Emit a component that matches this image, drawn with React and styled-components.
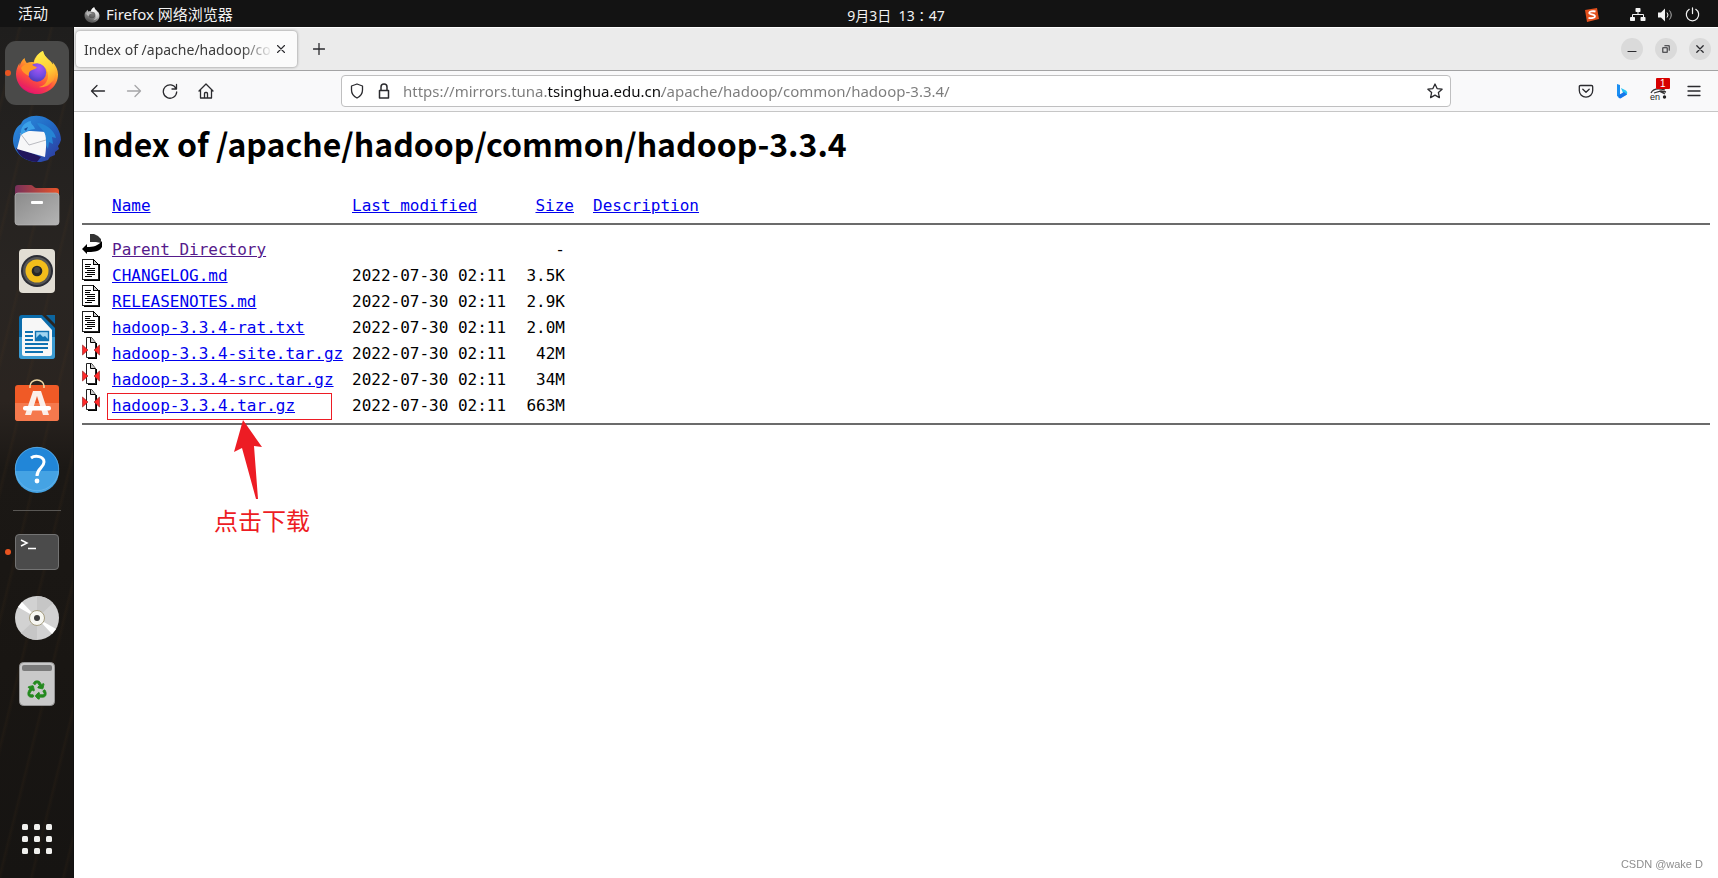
import React from 'react'
import styled, { createGlobalStyle } from 'styled-components'
import { FaRecycle } from 'react-icons/fa'

const uiFont = '"Noto Sans", "Noto Sans CJK SC", sans-serif';

const GlobalStyle = createGlobalStyle`
    * {
        box-sizing: border-box;
    }
    body {
        margin: 0;
        background: #fff;
        font-family: ${uiFont};
    }
    svg {
        display: block;
        flex: none;
    }
    button {
        padding: 0;
        border: none;
        background: none;
        font: inherit;
        color: inherit;
    }
`;

/* desktop */
const Desktop = styled.div`
    min-height: 100vh;
    display: flex;
    flex-direction: column;
`;
const TopBar = styled.header`
    height: 27px;
    display: flex;
    background: #131313;
    color: #f2f2f2;
    font-size: 15px;
    line-height: 27px;
`;
const Activities = styled.button`
    width: 74px;
    padding-right: 8px;
`;
const TopBarMain = styled.div`
    flex: 1;
    display: grid;
    grid-template-columns: 1fr auto 1fr;
`;
const AppMenu = styled.button`
    display: flex;
    align-items: center;
    gap: 6px;
    justify-self: start;
    margin-left: 10px;
`;
const Clock = styled.button`
    font-size: 14px;
    white-space: pre;
    padding-top: 2px;
`;
const Tray = styled.div`
    display: flex;
    align-items: center;
    justify-content: flex-end;
    gap: 12px;
    padding-right: 18px;
`;
const TrayApp = styled.span`
    margin-right: 19px;
`;
const Body = styled.div`
    flex: 1;
    display: flex;
`;

/* dock */
const Dock = styled.nav`
    width: 74px;
    flex: none;
    display: flex;
    flex-direction: column;
    align-items: center;
    gap: 2px;
    padding: 14px 0 7px;
    background:
        repeating-linear-gradient(104deg, rgba(120, 75, 30, 0) 0 17px, rgba(120, 75, 30, 0.08) 19px, rgba(120, 75, 30, 0) 22px 31px),
        linear-gradient(#1f1e1d, #292522 30%, #2a2420 44%, #1b1815 52%, #191613 75%, #161412);
    border-right: 1px solid #111;
`;
const DockItem = styled.button`
    width: 64px;
    height: 64px;
    display: flex;
    align-items: center;
    justify-content: center;
    border-radius: 11px;
    background: ${props => props.$active ? '#4a4a49' : 'transparent'};
    position: relative;

    &::before {
        content: '';
        display: ${props => props.$running ? 'block' : 'none'};
        position: absolute;
        left: 0;
        top: 29px;
        width: 6px;
        height: 6px;
        border-radius: 50%;
        background: #e95420;
    }
`;
const DockLine = styled.hr`
    width: 48px;
    height: 1px;
    margin: 7px 0;
    border: none;
    background: #595754;
`;
const DockEnd = styled.div`
    margin-top: auto;
`;

/* browser */
const Browser = styled.main`
    flex: 1;
    min-width: 0;
    display: flex;
    flex-direction: column;
    background: #fff;
`;
const TabStrip = styled.div`
    height: 44px;
    display: flex;
    align-items: center;
    padding: 0 7px 0 2px;
    background: #ebebeb;
    border-top: 1px solid #fff;
    border-bottom: 1px solid #a3a3a4;
`;
const Tab = styled.div`
    width: 221px;
    height: 36px;
    display: flex;
    align-items: center;
    padding: 0 8px;
    border-radius: 4px;
    background: #fbfbfb;
    box-shadow: 0 0 3px rgba(0, 0, 0, 0.45);
`;
const TabTitle = styled.span`
    flex: 1;
    white-space: nowrap;
    font-size: 14px;
    color: #3c3c3c;
    mask-image: linear-gradient(to left, transparent, #000 32px);
`;
const TabClose = styled.button`
    width: 16px;
    height: 16px;
    display: grid;
    place-items: center;
`;
const NewTab = styled.button`
    width: 32px;
    height: 32px;
    margin-left: 6px;
    display: grid;
    place-items: center;
`;
const WindowButtons = styled.div`
    margin-left: auto;
    display: flex;
    gap: 12px;
`;
const WindowButton = styled.button`
    width: 22px;
    height: 22px;
    border-radius: 50%;
    background: #dadada;
    display: grid;
    place-items: center;
`;
const NavBar = styled.div`
    height: 41px;
    display: flex;
    align-items: center;
    padding: 0 6px;
    background: #f9f9fa;
    border-bottom: 1px solid #c6c6c6;
`;
const NavButton = styled.button`
    width: 36px;
    height: 32px;
    display: grid;
    place-items: center;
    opacity: ${props => props.disabled ? 0.4 : 1};
`;
const Spring = styled.div`
    width: 117px;
`;
const UrlBar = styled.label`
    flex: 1;
    height: 32px;
    display: flex;
    align-items: center;
    gap: 11px;
    padding: 0 7px;
    border: 1px solid #bfbfc0;
    border-radius: 4px;
    background: #fff;
`;
/* the domain is darker than the rest of the address */
const UrlInput = styled.input`
    flex: 1;
    min-width: 0;
    padding: 0;
    border: none;
    outline: none;
    font-family: ${uiFont};
    font-size: 15px;
    color: transparent;
    background: linear-gradient(to right, #7b7b7b 145px, #0c0c0d 145px 259px, #7b7b7b 259px);
    background-clip: text;
`;

/* page */
const Page = styled.article`
    padding: 8px;
`;
const Title = styled.h1`
    margin: 0 0 30px;
    font-family: "Noto Sans CJK SC", sans-serif;
    font-size: 32px;
    line-height: 46px;
    font-weight: 700;
    color: #000;
`;
const Listing = styled.table`
    width: 100%;
    table-layout: fixed;
    border-spacing: 0;
    padding-bottom: 8px;
    border-bottom: 2px solid #6b6b6b;
    font-family: "DejaVu Sans Mono", monospace;
    font-size: 16px;
    line-height: 19px;
    color: #000;
`;
const Col = styled.col`
    width: ${props => props.$width};
`;
const HeadCell = styled.th`
    padding: 0 ${props => props.$right ? '19px' : '0'} 8px 0;
    border-bottom: 2px solid #6b6b6b;
    font-weight: 400;
    text-align: ${props => props.$right ? 'right' : 'left'};
`;
const Row = styled.tr`
    height: 26px;

    &:first-child {
        height: 34px;
    }
`;
const Cell = styled.td`
    padding: 0;
    vertical-align: bottom;
    white-space: nowrap;
    position: relative;
`;
const IconCell = styled(Cell)`
    padding-bottom: 4px;
`;
const SizeCell = styled(Cell)`
    padding-right: 28px;
    text-align: right;
`;
const Link = styled.a`
    color: ${props => props.$visited ? '#551a8b' : '#0000ee'};
    text-decoration: underline;
`;

/* notes drawn over the listing */
const Marker = styled.div`
    position: absolute;
    left: -5px;
    top: 4px;
    width: 225px;
    height: 27px;
    border: 1px solid #ed1c24;
`;
const Note = styled.div`
    position: absolute;
    left: 102px;
    top: 31px;
    color: #ed1c24;
    font-family: "Noto Sans CJK SC", sans-serif;
    font-size: 24px;
    line-height: 36px;

    svg {
        margin: 0 0 3px 20px;
    }
`;
const Watermark = styled.div`
    position: fixed;
    right: 15px;
    bottom: 6px;
    font-family: "Liberation Sans", sans-serif;
    font-size: 11px;
    line-height: 16px;
    color: #8e8e8e;
`;

/* dock icons, all on a 48px grid */
const FirefoxIcon = ({ size = 48, gray }) => (
  <svg width={size} height={size} viewBox={gray ? '2 1 44 45' : '0 0 48 48'} style={gray ? { filter: 'grayscale(1) brightness(1.1)' } : undefined}>
    <defs>
      <linearGradient id="ffBody" x1="0.8" y1="0.1" x2="0.35" y2="1">
        <stop offset="0" stopColor="#ffe44a" />
        <stop offset="0.35" stopColor="#ffa52a" />
        <stop offset="0.65" stopColor="#ff4f3c" />
        <stop offset="1" stopColor="#e0126c" />
      </linearGradient>
      <linearGradient id="ffFlame" x1="0.3" y1="0" x2="0.6" y2="1">
        <stop offset="0" stopColor="#fff04a" />
        <stop offset="0.6" stopColor="#ffcb35" />
        <stop offset="1" stopColor="#ff8a2b" />
      </linearGradient>
      <radialGradient id="ffGlobe" cx="0.6" cy="0.25" r="0.8">
        <stop offset="0" stopColor="#a856f4" />
        <stop offset="0.6" stopColor="#6f4be0" />
        <stop offset="1" stopColor="#4a3ab5" />
      </radialGradient>
    </defs>
    <path fill="url(#ffBody)" d="M30 2c1 5 5 8 8 11l2 3c0-1 0-2-.4-3C43 17 45 21 45 25.500C45 37 35.500 45 24 45S3 36 3 25c0-4 1.500-8 3.500-11 0 1 0 2 .2 3 .8-3.500 2.500-6 5-8 0 2 1 3.500 2 5 2.300-.9 4.500-1 7-.8 1-5 5-9.500 9.300-11.200z" />
    <path fill="url(#ffFlame)" d="M30 2c1 5 5 8 8 11 4 4.500 5.500 10 3.500 16C39 36 33 39 26 38c5-1 9-5 9-11 0-6-3-9.500-7-11-3-1-5-2-7-1.500C22 8.500 26 4 30 2z" />
    <circle cx="24" cy="23.500" r="9.200" fill="url(#ffGlobe)" />
    <path fill="#ff9727" d="M8 19c2-3 5-4.300 9-3.800 3 .4 4 2.600 7 2.800-1 2.500-4.500 2.500-6 3.500-2 1.200-2.500 3-2 5.500C12 25 9 23 8 19z" />
    <path fill="#f0246a" opacity=".45" d="M6 33c7 9 25 9 34-1-4 9-12 12.500-19 11.500C14 42.500 9 39 6 33z" />
  </svg>
);
const ThunderbirdIcon = () => (
  <svg width="48" height="48" viewBox="0 0 48 48">
    <defs>
      <linearGradient id="tbBody" x1="0" y1="0" x2="1" y2="1">
        <stop offset="0" stopColor="#2d8fdf" />
        <stop offset=".5" stopColor="#2269c4" />
        <stop offset="1" stopColor="#30349a" />
      </linearGradient>
    </defs>
    <path fill="url(#tbBody)" d="M14 3C19 0 29 0 35 4c8 4 13 13 13 21-1 3-2 5-3 6l1 3-4 3v3l-5 2-2 3-7 2C13 48 1 39 0 26c0-8 3-14 8-17 1-3 3-5 6-6z" />
    <path fill="#21155c" d="M3 33c5 1 16 5 25 9l-4 5C12 46 6 41 3 33z" />
    <path fill="#f7f7f8" d="M8 19c4-1 5-3 10-3l15 1c1 8 0 17-1 25L4 34z" />
    <path fill="none" stroke="#a9abb2" strokeWidth=".8" d="M7 18l9 12 17-5" />
    <path fill="#3ba1e8" d="M8 20c-1-7 3-13 10-14-1 3 3 4 4 8-5 0-9 2-14 6z" />
    <path fill="#164a99" d="M11 14l4-2-2 4z" />
    <path fill="#2584d4" d="M24 8c8 0 17 7 19 15l-4-1 1 7-4-2-1 7c-3-5-1-13-4-17-2-3-5-5-7-9z" />
  </svg>
);
const FilesIcon = () => (
  <svg width="48" height="48" viewBox="0 0 48 48">
    <defs>
      <linearGradient id="fiBack"><stop stopColor="#77305a" /><stop offset="1" stopColor="#e8552a" /></linearGradient>
      <linearGradient id="fiFront" x2="1" y2="1"><stop stopColor="#8b8b8b" /><stop offset="1" stopColor="#b4b4b4" /></linearGradient>
    </defs>
    <path fill="url(#fiBack)" d="M2 15V7a3 3 0 013-3h13c2 0 3 3 5 3h20a3 3 0 013 3v7z" />
    <rect x="2" y="12" width="44" height="32" rx="3" fill="url(#fiFront)" stroke="#b9b9b9" strokeWidth=".7" />
    <rect x="18" y="20" width="12" height="3" rx="1" fill="#fff" />
  </svg>
);
const MusicIcon = () => (
  <svg width="48" height="48" viewBox="0 0 48 48">
    <rect x="6" y="2" width="36" height="44" rx="4" fill="#e2ded4" />
    <circle cx="24" cy="24" r="16" fill="#2b2d35" />
    <circle cx="24" cy="24" r="14" fill="#555" />
    <circle cx="24" cy="24" r="11.500" fill="#f2bd1b" />
    <circle cx="24" cy="24" r="5.300" fill="#272727" />
    <circle cx="24" cy="23" r="3" fill="#454545" />
  </svg>
);
const WriterIcon = () => (
  <svg width="48" height="48" viewBox="0 0 48 48">
    <path fill="#0b6cab" d="M9 2h20l13 13v28a3 3 0 01-3 3H9a3 3 0 01-3-3V5a3 3 0 013-3z" />
    <path fill="#3b9bd2" d="M6 24h36v19a3 3 0 01-3 3H9a3 3 0 01-3-3z" />
    <path fill="#f7f7f7" d="M10 5h18l11 12v24a2 2 0 01-2 2H11a2 2 0 01-2-2V6z" />
    <path fill="#0c659e" d="M33 2h9v9z" />
    <path stroke="#0f72b2" strokeWidth="1.800" d="M12 19h8M12 23h8M12 27h8M12 31h23M12 35h23M12 39h18" />
    <rect x="22.500" y="18.500" width="13" height="9" fill="#9fd4f1" stroke="#0f72b2" strokeWidth="1.400" />
    <path fill="#0f72b2" d="M23 27v-2l4-4 3 3 2-1 3 3v1z" />
  </svg>
);
const SoftwareIcon = () => (
  <svg width="48" height="48" viewBox="0 0 48 48">
    <rect x="2" y="6" width="44" height="36" rx="3" fill="#f05a26" />
    <path fill="#f5794d" d="M2 24h44v15a3 3 0 01-3 3H5a3 3 0 01-3-3z" />
    <path fill="none" stroke="#efd6a2" strokeWidth="1.600" d="M17 9V7a7 6 0 0114 0v2" />
    <path fill="#fbeee8" fillRule="evenodd" d="M20 12h8l8 24h-6l-6-19-6 19h-6z" />
    <rect x="10" y="27" width="28" height="4.500" rx="2" fill="#fff" />
  </svg>
);
const HelpIcon = () => (
  <svg width="48" height="48" viewBox="0 0 48 48">
    <circle cx="24" cy="24" r="22" fill="#2186d8" />
    <path fill="#45a3e4" d="M2 26h44a22 22 0 01-44 0z" />
    <circle cx="24" cy="24" r="21.700" fill="none" stroke="#6ab8ec" strokeWidth=".7" />
    <path fill="none" stroke="#fff" strokeWidth="3" d="M18 13c4-3 13-2 13 4 0 6-7 6-7 14" />
    <circle cx="24" cy="36" r="2.400" fill="#fff" />
  </svg>
);
const TerminalIcon = () => (
  <svg width="48" height="48" viewBox="0 0 48 48">
    <rect x="2.500" y="6.500" width="43" height="35" rx="3.500" fill="#4b4b4b" stroke="#737373" />
    <path fill="none" stroke="#fff" strokeWidth="1.500" d="M8 12l6 3-6 3M15 20.500h8" />
  </svg>
);
const DiscIcon = () => (
  <svg width="48" height="48" viewBox="0 0 48 48">
    <circle cx="24" cy="24" r="22" fill="#d2d2d2" />
    <path fill="#c6c6c6" d="M24 24V2a22 22 0 0116 7zM24 24v22a22 22 0 01-16-7z" />
    <path fill="#fff" d="M24 24L5 13l4-5zM24 24l19 11-4 5z" />
    <circle cx="24" cy="24" r="7.500" fill="#f7f7f2" stroke="#a59d81" />
    <circle cx="24" cy="24" r="3" fill="#3d3d3d" />
  </svg>
);
const TrashIcon = () => (
  <svg width="48" height="48" viewBox="0 0 48 48">
    <rect x="6.500" y="2.500" width="35" height="43" rx="4" fill="#c9c9c9" stroke="#969696" />
    <rect x="9" y="5" width="30" height="6" rx="2" fill="#7b7b7b" />
    <FaRecycle x="14.500" y="20.500" size={19} color="#258a1f" stroke="#258a1f" strokeWidth="24" />
  </svg>
);
const AppsIcon = () => (
  <svg width="30" height="30" viewBox="0 0 30 30" fill="#f0f0ee">
    {[0, 12, 24].map(y => [0, 12, 24].map(x => (
      <rect key={`${x}-${y}`} x={x} y={y} width="6" height="6" rx="1.500" />
    )))}
  </svg>
);

/* line icons of the top bar and the browser */
const Stroke = ({ size = 16, box = 16, width = 1.3, color = '#2b2b2f', d }) => (
  <svg width={size} height={size} viewBox={`0 0 ${box} ${box}`} fill="none" stroke={color} strokeWidth={width} strokeLinecap="round" strokeLinejoin="round">
    <path d={d} />
  </svg>
);
const SogouIcon = () => (
  <svg width="14" height="14" viewBox="0 0 14 14">
    <path fill="#e2501d" d="M0 2L12 0l2 11L2 14z" />
    <path fill="none" stroke="#fff" strokeWidth="1.800" d="M10.500 3.500c-3-.6-6 0-6.300 1.400C4 6.800 10 6 10 8.300c0 1.700-3.500 2.300-6.500 1.500" />
  </svg>
);
const NetworkIcon = () => (
  <svg width="16" height="14" viewBox="0 0 16 14" fill="#f2f2f2">
    <rect x="5.500" y="0" width="5" height="4" rx=".7" />
    <rect x="0" y="9" width="5" height="4" rx=".7" />
    <rect x="10.500" y="9" width="5" height="4" rx=".7" />
    <path fill="none" stroke="#f2f2f2" d="M8 4v3M2.500 9V6.500h11V9" />
  </svg>
);
const VolumeIcon = () => (
  <svg width="15" height="14" viewBox="0 0 15 14">
    <path fill="#f2f2f2" d="M0 4.500h3l4-4v13l-4-4H0z" />
    <path fill="none" stroke="#f2f2f2" d="M9 4.500q2 2.500 0 5" />
    <path fill="none" stroke="#b0b0b0" d="M11.500 2.500q3.500 4.500 0 9" />
  </svg>
);
const BingIcon = () => (
  <svg width="12" height="16" viewBox="0 0 12 16">
    <path fill="#1b8ff2" d="M1 1l3 1v11l-1.500 1L1 13z" />
    <path fill="#28c4f5" d="M5 5l5 2.500q2 1.500 1 4L4 15q-2 0-2-2l5-3z" />
    <path fill="#1676ea" d="M2 12.500L8 9l3 2.500L4.500 15.500Q2 15 2 12.500z" />
  </svg>
);
const TranslateIcon = () => (
  <svg width="24" height="26" viewBox="0 0 24 26">
    <path fill="none" stroke="#333" strokeWidth="1.300" d="M5 15c2-4 7-5 14-3M8 15l7-2 5 1M13 13l6 3" />
    <text x="4" y="22" fontFamily="Liberation Sans" fontSize="9" fill="#222">en</text>
    <circle cx="18.500" cy="19" r="1.700" fill="#222" />
    <rect x="10" y="0" width="14" height="11" rx="1" fill="#d70000" />
    <text x="14" y="9" fontFamily="Liberation Sans" fontSize="10" fill="#fff">1</text>
  </svg>
);

/* server listing icons */
const BackIcon = () => (
  <svg width="20" height="22" viewBox="0 0 20 22">
    <path fill="#333" d="M8 1h4l4 2 3 3v4l-5-1-6 0z" />
    <path fill="#000" d="M0 16l5-5v3c6 0 11-1 15-6v6c-2 3-4 4-7 4.500-3 .5-5 .5-8 .5v2z" />
  </svg>
);
const TextIcon = () => (
  <svg width="20" height="22" viewBox="0 0 20 22" shapeRendering="crispEdges">
    <path fill="#000" d="M2 22h16V6l-1-1v15H2z" />
    <path fill="#fff" stroke="#222" d="M.5.500h11l5 5v15H.5z" />
    <path fill="#ccc" stroke="#000" d="M11.500.5v5h5z" />
    <path stroke="#000" d="M3 5.500h6M3 7.500h5M3 9.500h10M5 11.500h8M3 13.500h10M5 15.500h8M3 17.500h7" />
  </svg>
);
const ArchiveIcon = () => (
  <svg width="20" height="22" viewBox="0 0 20 22">
    <path fill="#000" d="M6 22h9V6h-1v14H6z" />
    <path fill="#fff" stroke="#222" d="M4.500.5h5l4 5v15h-9z" />
    <path fill="#ccc" stroke="#000" d="M8.500.5v5h5" />
    <path fill="#ff2a2a" stroke="#8f1515" strokeWidth=".6" d="M.5 8v10L6 13zM17.500 8v10L12 13z" />
  </svg>
);
const icons = { back: BackIcon, text: TextIcon, archive: ArchiveIcon };

const dockApps = [
  { name: 'Firefox', icon: <FirefoxIcon />, active: true, running: true },
  { name: 'Thunderbird', icon: <ThunderbirdIcon /> },
  { name: 'Files', icon: <FilesIcon /> },
  { name: 'Rhythmbox', icon: <MusicIcon /> },
  { name: 'LibreOffice Writer', icon: <WriterIcon /> },
  { name: 'Software', icon: <SoftwareIcon /> },
  { name: 'Help', icon: <HelpIcon /> },
];
const dockPlaces = [
  { name: 'Terminal', icon: <TerminalIcon />, running: true },
  { name: 'Disc', icon: <DiscIcon /> },
  { name: 'Trash', icon: <TrashIcon /> },
];

const files = [
  { icon: 'back', name: 'Parent Directory', modified: '', size: '-', visited: true },
  { icon: 'text', name: 'CHANGELOG.md', modified: '2022-07-30 02:11', size: '3.5K' },
  { icon: 'text', name: 'RELEASENOTES.md', modified: '2022-07-30 02:11', size: '2.9K' },
  { icon: 'text', name: 'hadoop-3.3.4-rat.txt', modified: '2022-07-30 02:11', size: '2.0M' },
  { icon: 'archive', name: 'hadoop-3.3.4-site.tar.gz', modified: '2022-07-30 02:11', size: '42M' },
  { icon: 'archive', name: 'hadoop-3.3.4-src.tar.gz', modified: '2022-07-30 02:11', size: '34M' },
  { icon: 'archive', name: 'hadoop-3.3.4.tar.gz', modified: '2022-07-30 02:11', size: '663M', marked: true },
];

const DockApps = ({ apps }) => apps.map(app => (
  <DockItem key={app.name} aria-label={app.name} $active={app.active} $running={app.running}>
    {app.icon}
  </DockItem>
));

const FileRow = ({ file }) => {
  const Icon = icons[file.icon];
  return (
    <Row>
        <IconCell><Icon/></IconCell>
        <Cell>
            <Link href="#" $visited={file.visited}>{file.name}</Link>
            {file.marked && (
                <>
                    <Marker/>
                    <Note>
                        <svg width="28" height="79" viewBox="0 0 28 79">
                            <path fill="#ed1c24" d="M9 0l19 27-8-1 4 53h-2L8 28l-8 4z" />
                        </svg>
                        点击下载
                    </Note>
                </>
            )}
        </Cell>
        <Cell>{file.modified}</Cell>
        <SizeCell>{file.size}</SizeCell>
        <Cell/>
    </Row>
  )
}

const App = () => {
  return (
    <Desktop>
        <GlobalStyle/>
        <TopBar>
            <Activities>活动</Activities>
            <TopBarMain>
                <AppMenu><FirefoxIcon size={16} gray/>Firefox 网络浏览器</AppMenu>
                <Clock>9月3日  13∶47</Clock>
                <Tray>
                    <TrayApp><SogouIcon/></TrayApp>
                    <NetworkIcon/>
                    <VolumeIcon/>
                    <Stroke size={15} color="#f2f2f2" d="M8 1v6M4.500 2.500a6.600 6.600 0 107 0" />
                </Tray>
            </TopBarMain>
        </TopBar>
        <Body>
            <Dock>
                <DockApps apps={dockApps}/>
                <DockLine/>
                <DockApps apps={dockPlaces}/>
                <DockEnd>
                    <DockItem aria-label="Show Applications"><AppsIcon/></DockItem>
                </DockEnd>
            </Dock>
            <Browser>
                <TabStrip>
                    <Tab>
                        <TabTitle>Index of /apache/hadoop/co</TabTitle>
                        <TabClose aria-label="Close tab"><Stroke size={8} box={8} width={1.1} d="M.5.500l7 7M7.500.5l-7 7" /></TabClose>
                    </Tab>
                    <NewTab aria-label="New tab"><Stroke size={12} box={12} d="M6 .5v11M.5 6h11" /></NewTab>
                    <WindowButtons>
                        <WindowButton aria-label="Minimize"><Stroke size={10} box={10} width={1.2} d="M1 7.500h8" /></WindowButton>
                        <WindowButton aria-label="Restore"><Stroke size={8} box={10} width={1.3} d="M1 3.500h5.500v5.500H1zM3.500 1H9v5.500" /></WindowButton>
                        <WindowButton aria-label="Close"><Stroke size={8} box={10} width={1.6} d="M1 1l8 8M9 1L1 9" /></WindowButton>
                    </WindowButtons>
                </TabStrip>
                <NavBar>
                    <NavButton aria-label="Back"><Stroke d="M14.500 8H1.500M7 2.500L1.500 8 7 13.500" /></NavButton>
                    <NavButton aria-label="Forward" disabled><Stroke d="M1.500 8h13M9 2.500L14.500 8 9 13.500" /></NavButton>
                    <NavButton aria-label="Reload"><Stroke d="M14.500 1.500v4.500H10M14 5.500A6.700 6.700 0 1014.700 9" /></NavButton>
                    <NavButton aria-label="Home"><Stroke d="M1 8l7-7 7 7M2.500 7v8h11V7M6.500 15v-4.500q0-1 1-1h1q1 0 1 1V15" /></NavButton>
                    <Spring/>
                    <UrlBar>
                        <Stroke d="M8 1l5.500 2v4c0 4-2.500 6.500-5.500 8-3-1.500-5.500-4-5.500-8V3z" />
                        <Stroke width={1.5} d="M3.500 7.500h9V15h-9zM5 7V4a3 3 0 016 0v3" />
                        <UrlInput aria-label="Address" defaultValue="https://mirrors.tuna.tsinghua.edu.cn/apache/hadoop/common/hadoop-3.3.4/"/>
                        <Stroke d="M8 1l2.100 4.600 5 .6-3.700 3.400 1 5L8 12.100l-4.400 2.500 1-5L.900 6.200l5-.6z" />
                    </UrlBar>
                    <Spring/>
                    <NavButton aria-label="Pocket"><Stroke d="M2.500 2.500h11q1.200 0 1.200 1.200V7.500a6.700 6.700 0 01-13.400 0V3.700q0-1.200 1.200-1.200zM4.800 6.200L8 9.300l3.200-3.100" /></NavButton>
                    <NavButton aria-label="Bing"><BingIcon/></NavButton>
                    <NavButton aria-label="Translate"><TranslateIcon/></NavButton>
                    <NavButton aria-label="Menu"><Stroke d="M2 3.500h12M2 8h12M2 12.500h12" /></NavButton>
                </NavBar>
                <Page>
                    <Title>Index of /apache/hadoop/common/hadoop-3.3.4</Title>
                    <Listing>
                        <colgroup>
                            <Col $width="30px"/>
                            <Col $width="240px"/>
                            <Col $width="174px"/>
                            <Col $width="67px"/>
                            <Col/>
                        </colgroup>
                        <thead>
                            <tr>
                                <HeadCell/>
                                <HeadCell><Link href="#">Name</Link></HeadCell>
                                <HeadCell><Link href="#">Last modified</Link></HeadCell>
                                <HeadCell $right><Link href="#">Size</Link></HeadCell>
                                <HeadCell><Link href="#">Description</Link></HeadCell>
                            </tr>
                        </thead>
                        <tbody>
                            {files.map(file => <FileRow key={file.name} file={file}/>)}
                        </tbody>
                    </Listing>
                </Page>
            </Browser>
        </Body>
        <Watermark>CSDN @wake D</Watermark>
    </Desktop>
  )
}

export default App
